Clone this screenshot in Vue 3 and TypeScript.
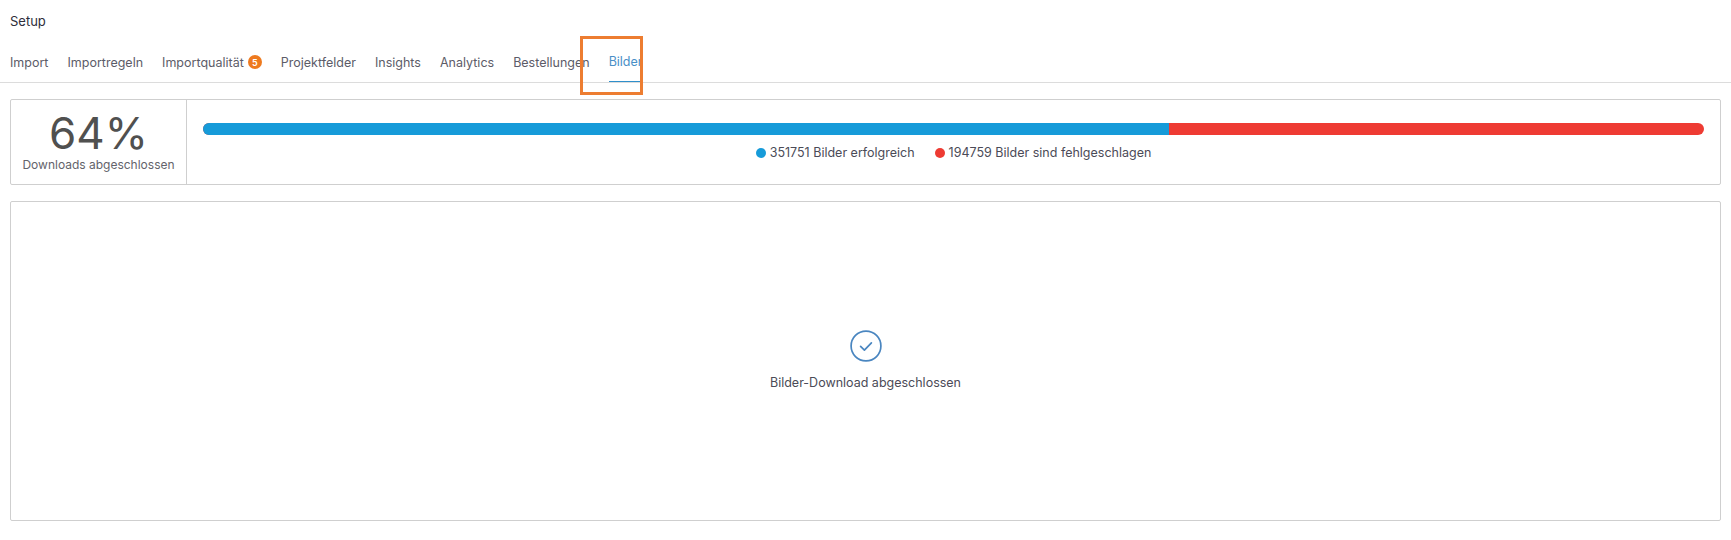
<template>
  <div class="page">
    <h1 class="title">Setup</h1>

    <nav class="tabs">
      <a v-for="tab in tabs" :key="tab.label" class="tab" :class="{ active: tab.label === activeTab }">
        {{ tab.label }}
        <span v-if="tab.badge" class="badge">{{ tab.badge }}</span>
      </a>
      <span class="highlight"></span>
    </nav>

    <section class="card stats">
      <div class="summary">
        <div class="percent">{{ percent }}%</div>
        <div class="summary-label">Downloads abgeschlossen</div>
      </div>
      <div class="progress">
        <div class="bar">
          <div class="bar-ok" :style="{ width: okWidth }"></div>
        </div>
        <div class="legend">
          <span class="legend-item"><i class="dot dot-ok"></i>{{ ok }} Bilder erfolgreich</span>
          <span class="legend-item"><i class="dot dot-failed"></i>{{ failed }} Bilder sind fehlgeschlagen</span>
        </div>
      </div>
    </section>

    <section class="card done">
      <svg class="check" width="32" height="32" viewBox="0 0 32 32" fill="none">
        <circle cx="16" cy="16" r="14.9" stroke="#4a86c0" stroke-width="1.7" />
        <path d="M10.6 16.4l3.8 3.8 7-7.4" stroke="#4a86c0" stroke-width="1.7" stroke-linecap="round" stroke-linejoin="round" />
      </svg>
      <p class="done-text">Bilder-Download abgeschlossen</p>
    </section>
  </div>
</template>

<script setup lang="ts">
const tabs: { label: string; badge?: number }[] = [
  { label: "Import" },
  { label: "Importregeln" },
  { label: "Importqualität", badge: 5 },
  { label: "Projektfelder" },
  { label: "Insights" },
  { label: "Analytics" },
  { label: "Bestellungen" },
  { label: "Bilder" },
];
const activeTab = "Bilder";

const ok = 351751;
const failed = 194759;
const percent = Math.floor((ok / (ok + failed)) * 100);
const okWidth = `${(ok / (ok + failed)) * 100}%`;
</script>

<style>
html,
body {
  background: #fff;
}
</style>

<style scoped>
.page {
  height: 540px;
  box-sizing: border-box;
  padding-top: 13px;
  font-family: Inter, "Liberation Sans", sans-serif;
  color: #4b4b57;
  overflow: hidden;
}

.title {
  margin: 0 0 0 10px;
  font-size: 13px;
  line-height: 16px;
  font-weight: 400;
  color: #2e2e3a;
}

.tabs {
  position: relative;
  display: flex;
  gap: 19px;
  height: 54px;
  box-sizing: border-box;
  padding-left: 10px;
  border-bottom: 1px solid #dcdcdc;
}

.tab {
  display: flex;
  align-items: center;
  height: 53px;
  box-sizing: border-box;
  padding-top: 13px;
  font-size: 12.5px;
  color: #5c5c68;
  white-space: nowrap;
}

.tab.active {
  color: #4a8fc7;
  border-bottom: 1px solid #2f8fcb;
}

.badge {
  display: flex;
  align-items: center;
  justify-content: center;
  width: 14px;
  height: 14px;
  margin-left: 4px;
  border-radius: 50%;
  background: #ee7a1f;
  color: #fff;
  font-size: 9px;
  font-weight: 600;
}

.highlight {
  position: absolute;
  left: 580px;
  top: 7px;
  width: 63px;
  height: 59px;
  box-sizing: border-box;
  border: 3px solid #ed7d31;
}

.card {
  margin: 0 10px;
  border: 1px solid #cfcfcf;
  border-radius: 2px;
}

.stats {
  display: flex;
  height: 86px;
  margin-top: 16px;
  box-sizing: border-box;
}

.summary {
  width: 176px;
  flex: none;
  box-sizing: border-box;
  border-right: 1px solid #cfcfcf;
  text-align: center;
}

.percent {
  margin-top: 10px;
  font-size: 44px;
  line-height: 46px;
  color: #50504f;
}

.summary-label {
  margin-top: 1px;
  font-size: 12px;
  line-height: 16px;
  color: #63636b;
}

.progress {
  flex: 1;
  padding: 23px 16px 0;
}

.bar {
  height: 12px;
  border-radius: 6px;
  background: #ee3b33;
  overflow: hidden;
}

.bar-ok {
  height: 100%;
  background: #169bd9;
}

.legend {
  display: flex;
  justify-content: center;
  gap: 20px;
  margin-top: 10px;
  font-size: 12.5px;
  line-height: 16px;
}

.legend-item {
  display: flex;
  align-items: center;
}

.dot {
  width: 10px;
  height: 10px;
  margin-right: 4px;
  border-radius: 50%;
}

.dot-ok {
  background: #169bd9;
}

.dot-failed {
  background: #ee3b33;
}

.done {
  display: flex;
  flex-direction: column;
  align-items: center;
  height: 320px;
  margin-top: 16px;
  box-sizing: border-box;
  padding-top: 128px;
}

.done-text {
  margin: 13px 0 0;
  font-size: 12.5px;
  line-height: 16px;
  color: #4b4b57;
}
</style>
